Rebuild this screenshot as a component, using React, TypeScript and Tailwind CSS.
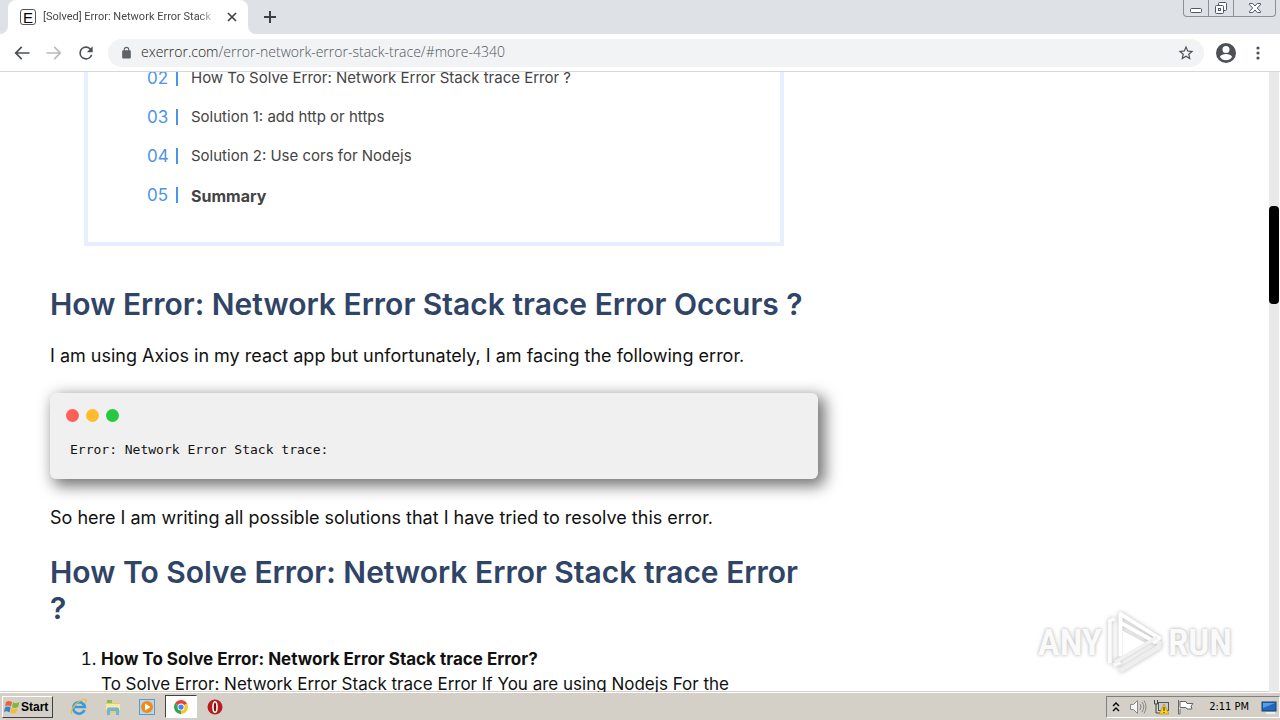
import type { ReactNode } from "react";

const tocItems = [
  { num: "02", label: "How To Solve Error: Network Error Stack trace Error ?", bold: false },
  { num: "03", label: "Solution 1: add http or https", bold: false },
  { num: "04", label: "Solution 2: Use cors for Nodejs", bold: false },
  { num: "05", label: "Summary", bold: true },
];

function IconButton({ label, className = "", children }: { label: string; className?: string; children: ReactNode }) {
  return (
    <button aria-label={label} className={`flex shrink-0 items-center justify-center ${className}`}>
      {children}
    </button>
  );
}

function TabStrip() {
  return (
    <header className="flex h-[34px] shrink-0 items-start bg-[#dee1e6]">
      <div className="relative ml-2 flex h-full w-[240px] items-center rounded-t-lg bg-white pl-3">
        <svg className="absolute bottom-0 -left-2 size-2" viewBox="0 0 8 8" aria-hidden="true">
          <path d="M8 0v8H0a8 8 0 0 0 8-8z" fill="#fff" />
        </svg>
        <svg className="absolute -right-2 bottom-0 size-2" viewBox="0 0 8 8" aria-hidden="true">
          <path d="M0 0v8h8a8 8 0 0 1-8-8z" fill="#fff" />
        </svg>
        <span className="flex size-4 shrink-0 items-center justify-center rounded-[3px] border border-[#555] font-['Liberation_Sans',sans-serif] text-[15px] leading-none text-black">
          E
        </span>
        <span className="ml-[7px] w-[173px] overflow-hidden font-[Roboto,sans-serif] text-[11px] whitespace-nowrap text-[#45484c] [mask-image:linear-gradient(to_right,#000_156px,transparent_173px)]">
          [Solved] Error: Network Error Stack trace
        </span>
        <IconButton label="Close tab" className="ml-2 size-4">
          <svg className="size-4" viewBox="0 0 16 16" stroke="#3c4043" strokeWidth="1.6">
            <path d="M4 4l8 8M12 4l-8 8" />
          </svg>
        </IconButton>
      </div>
      <IconButton label="New tab" className="ml-3 h-[34px] w-5">
        <svg className="size-4" viewBox="0 0 16 16" stroke="#3c4043" strokeWidth="2">
          <path d="M8 2v12M2 8h12" />
        </svg>
      </IconButton>
      <div className="mr-1 ml-auto flex h-[17px] rounded-b border border-t-0 border-[#8b8f98]">
        <IconButton label="Minimize" className="w-[25px] border-r border-[#8b8f98]">
          <svg className="h-4 w-5" viewBox="0 0 20 16" fill="#fff" stroke="#4e5668">
            <rect x="4.500" y="8.500" width="11" height="4" rx="1" />
          </svg>
        </IconButton>
        <IconButton label="Restore" className="w-[25px] border-r border-[#8b8f98]">
          <svg className="h-4 w-4" viewBox="0 0 16 16" fill="#fff" stroke="#4e5668">
            <rect x="5.500" y="2.500" width="8" height="8" rx="1" />
            <rect x="2.500" y="5.500" width="8" height="8" rx="1" />
            <rect x="5.500" y="8.500" width="2" height="2" />
          </svg>
        </IconButton>
        <IconButton label="Close" className="w-[41px]">
          <svg className="h-4 w-4" viewBox="0 0 16 16" fill="#fff" stroke="#4e5668">
            <path d="M2.500 3.500h3.200L8 6l2.300-2.500h3.200v1.200L10.300 8l3.200 3.400v1.100h-3.200L8 10l-2.300 2.500H2.500v-1.100L5.700 8 2.500 4.700z" />
          </svg>
        </IconButton>
      </div>
    </header>
  );
}

function Toolbar() {
  return (
    <div className="flex h-[38px] shrink-0 items-center border-b border-[#d5d7da] bg-white pl-3">
      <IconButton label="Back" className="mr-3 size-5">
        <svg className="size-5" viewBox="0 0 24 24" fill="#4d5156">
          <path d="M21 11H6.800l5.600-5.600L11 4l-8 8 8 8 1.400-1.400L6.800 13H21z" />
        </svg>
      </IconButton>
      <IconButton label="Forward" className="mr-3 size-5">
        <svg className="size-5" viewBox="0 0 24 24" fill="#b9bbbe">
          <path d="M3 11h14.200l-5.600-5.600L13 4l8 8-8 8-1.400-1.400 5.600-5.600H3z" />
        </svg>
      </IconButton>
      <IconButton label="Reload" className="mr-3 size-5">
        <svg className="size-5" viewBox="0 0 24 24" fill="#4d5156">
          <path d="M17.650 6.350A7.958 7.958 0 0 0 12 4a8 8 0 1 0 7.730 10h-2.080A6 6 0 1 1 12 6c1.660 0 3.140.69 4.220 1.780L13 11h7V4z" />
        </svg>
      </IconButton>
      <div className="flex h-7 flex-1 items-center rounded-full bg-[#f1f3f4] pr-2 pl-3">
        <svg className="mr-2 size-[13px] shrink-0" viewBox="0 0 24 24" fill="#5f6368" aria-hidden="true">
          <path d="M18 8h-1V6.500a5 5 0 0 0-10 0V8H6a2 2 0 0 0-2 2v11a2 2 0 0 0 2 2h12a2 2 0 0 0 2-2V10a2 2 0 0 0-2-2zM9 6.500a3 3 0 0 1 6 0V8H9z" />
        </svg>
        <a href="#more-4340" className="-mt-0.5 flex-1 font-['Open_Sans',sans-serif] text-sm font-light text-[#50555b]">
          <span className="text-[#1c1d20]">exerror.com</span>/error-network-error-stack-trace/#more-4340
        </a>
        <IconButton label="Bookmark this page" className="size-5">
          <svg className="size-[18px]" viewBox="0 0 24 24" fill="#4d5156">
            <path d="M22 9.240l-7.190-.62L12 2 9.190 8.630 2 9.240l5.460 4.730L5.820 21 12 17.270 18.180 21l-1.630-7.030zM12 15.400l-3.760 2.270 1-4.280-3.320-2.880 4.380-.38L12 6.100l1.710 4.040 4.380.38-3.320 2.880 1 4.280z" />
          </svg>
        </IconButton>
      </div>
      <IconButton label="Profile" className="ml-3 size-5">
        <svg className="size-5" viewBox="2 2 20 20" fill="#4d5156">
          <path d="M12 2a10 10 0 1 0 0 20 10 10 0 0 0 0-20zm0 3a3.500 3.500 0 1 1 0 7 3.500 3.500 0 0 1 0-7zm0 14.200a7.200 7.200 0 0 1-6-3.220c.03-1.990 4-3.080 6-3.080s5.970 1.090 6 3.080a7.200 7.200 0 0 1-6 3.220z" />
        </svg>
      </IconButton>
      <IconButton label="Menu" className="mx-3 size-5">
        <svg className="size-5" viewBox="0 0 20 20" fill="#4d5156">
          <circle cx="10" cy="5" r="1.600" />
          <circle cx="10" cy="10" r="1.600" />
          <circle cx="10" cy="15" r="1.600" />
        </svg>
      </IconButton>
    </div>
  );
}

function Watermark() {
  return (
    <div className="absolute right-12 bottom-4 flex items-center gap-1 font-['Liberation_Sans_Narrow','Roboto_Condensed',Roboto,sans-serif] text-[37px] leading-none font-semibold text-[#fafafa] [text-shadow:0_0_3px_#c0c0c0,0_0_5px_#d4d4d4]">
      <span>ANY</span>
      <svg className="h-[68px] w-[58px] overflow-visible drop-shadow-[0_0_2px_#b8b8b8]" viewBox="0 0 60 68" fill="none" strokeLinejoin="round" aria-hidden="true">
        <path d="M17 22l24 13-24 14z" fill="#fff" />
        <path d="M4 56V12l5-2M8 58l7-3" stroke="#fbfbfb" strokeWidth="4" />
        <path d="M15 49V5l40 25-4 4-36-20" stroke="#fff" strokeWidth="4" />
        <path d="M9 55l44-26" stroke="#f1f1f1" strokeWidth="4" />
        <path d="M14 64l41-25v-6" stroke="#eeeeee" strokeWidth="5" />
      </svg>
      <span>RUN</span>
    </div>
  );
}

function Article() {
  return (
    <article className="-mt-[13px] ml-[50px] w-[768px] shrink-0 text-[#111]">
      <nav aria-label="Table of contents" className="mx-[34px] border-4 border-t-0 border-[#e7effe] pb-[27px]">
        <ul className="ml-[59px]">
          {tocItems.map((item) => (
            <li key={item.num}>
              <a href="#toc" className="flex h-[39px] items-center">
                <span className="mb-0.5 w-[31px] shrink-0 border-r-2 border-[#4b95e9] text-[17px] leading-4 text-[#4b95e9]">{item.num}</span>
                <span className={`ml-[13px] text-[#444] ${item.bold ? "text-base font-bold" : "text-[15px]"}`}>{item.label}</span>
              </a>
            </li>
          ))}
        </ul>
      </nav>
      <h2 className="mt-10 text-[30px] leading-9 font-semibold whitespace-nowrap text-[#2f4466]">
        How Error: Network Error Stack trace Error Occurs ?
      </h2>
      <p className="mt-[21px] text-lg leading-[25px]">
        I am using Axios in my react app but unfortunately, I am facing the following error.
      </p>
      <div className="mt-[25px] h-[86px] rounded-md bg-[#f0f0f0] pt-4 pl-4 shadow-[5px_5px_15px_2px_rgba(0,0,0,0.55)]">
        <div className="flex gap-[7px]">
          <span className="size-[13px] rounded-full bg-[#ff5f56]" />
          <span className="size-[13px] rounded-full bg-[#ffbd2e]" />
          <span className="size-[13px] rounded-full bg-[#27c93f]" />
        </div>
        <pre className="mt-[18px] ml-1 font-['DejaVu_Sans_Mono',monospace] text-[13px] leading-5">Error: Network Error Stack trace:</pre>
      </div>
      <p className="mt-[26px] text-lg leading-[25px]">
        So here I am writing all possible solutions that I have tried to resolve this error.
      </p>
      <h2 className="mt-6 text-[30px] leading-9 font-semibold text-[#2f4466]">
        How To Solve Error: Network Error Stack trace Error ?
      </h2>
      <ol className="mt-[21px] list-decimal pl-[51px] text-[17px] leading-[25px]">
        <li>
          <strong className="font-bold">How To Solve Error: Network Error Stack trace Error?</strong>
          <br />
          To Solve Error: Network Error Stack trace Error If You are using Nodejs For the
        </li>
      </ol>
    </article>
  );
}

function Taskbar() {
  return (
    <footer className="flex h-7 shrink-0 items-center border-t border-white bg-[#d4d0c8] font-['DejaVu_Sans_Condensed','DejaVu_Sans',sans-serif] text-[11px] text-black outline outline-[#d4d0c8]">
      <button className="ml-0.5 flex h-[22px] items-center gap-px border border-t-white border-r-[#404040] border-b-[#404040] border-l-white pr-1 pl-px font-['Liberation_Sans',sans-serif] text-xs font-bold">
        <svg className="size-4" viewBox="0 0 16 16" aria-hidden="true">
          <path d="M2 3c2-1.500 4-1.500 6 0L7 7.500c-2-1.300-4-1.300-6 0z" fill="#ec6530" />
          <path d="M9 3.200c2 1.300 4 1.300 6.500-.2l-1.500 5c-2 1.300-4 1.300-6 0z" fill="#7fb541" />
          <path d="M1 8.500c2-1.300 4-1.300 5.700 0l-1.200 5c-2-1.500-4-1.500-5.500-.5z" fill="#3683d0" />
          <path d="M7.700 8.800c2 1.300 4 1.300 6 .2l-1.400 4.500c-2 1.300-4 1.300-6 0z" fill="#f7bd32" />
        </svg>
        Start
      </button>
      <IconButton label="Internet Explorer" className="ml-4 size-5">
        <svg className="size-[18px]" viewBox="0 0 18 18" fill="none">
          <path d="M14.500 12a5.800 5.800 0 1 1 .3-3H5" stroke="#3a9ad9" strokeWidth="2.600" />
          <path d="M2 16C-1 13 6 4 12 2c4-1.300 5 0 3.500 3" stroke="#e9bd3d" strokeWidth="1.300" />
        </svg>
      </IconButton>
      <IconButton label="File Explorer" className="ml-3.5 size-5">
        <svg className="size-[18px]" viewBox="0 0 18 18">
          <path d="M2 3h6l1 2h7v10H2z" fill="#e8cc68" />
          <path d="M3 2h5v3H3z" fill="#7fbd6d" />
          <path d="M2 6h14v6H2z" fill="#f9e9a4" />
          <path d="M3 17v-6q0-1.500 1.500-1.500h9Q15 9.500 15 11v6h-3v-4H6v4z" fill="#6eb4db" />
        </svg>
      </IconButton>
      <IconButton label="Media Player" className="ml-3.5 size-5">
        <svg className="size-[18px]" viewBox="0 0 18 18">
          <rect x="1.500" y="1.500" width="15" height="15" fill="#b5d8ef" stroke="#5b9bc9" />
          <circle cx="9" cy="9" r="6" fill="#f28a16" />
          <path d="M7 5.500v7L12.500 9z" fill="#fff" />
        </svg>
      </IconButton>
      <IconButton label="Chrome" className="ml-2 h-[23px] w-8 border border-t-[#404040] border-r-white border-b-white border-l-[#404040] bg-white">
        <svg className="size-3.5" viewBox="0 0 16 16">
          <path d="M8 8L1.100 4A8 8 0 0 1 14.900 4z" fill="#e54335" />
          <path d="M8 8L1.100 4A8 8 0 0 0 8 16z" fill="#34a353" />
          <path d="M8 8l6.900-4A8 8 0 0 1 8 16z" fill="#f9c82d" />
          <circle cx="8" cy="8" r="4" fill="#fff" />
          <circle cx="8" cy="8" r="3" fill="#4285f4" />
        </svg>
      </IconButton>
      <IconButton label="Opera" className="ml-2 size-5">
        <svg className="size-4" viewBox="0 0 16 16">
          <circle cx="8" cy="8" r="7.500" fill="#ba1a1c" />
          <ellipse cx="8" cy="8" rx="2" ry="5.300" fill="#7d0c0e" stroke="#fff" strokeWidth="1.600" />
        </svg>
      </IconButton>
      <div className="ml-auto flex h-[22px] items-center border border-t-[#808080] border-r-white border-b-white border-l-[#808080] pr-0.5 pl-1">
        <IconButton label="Show hidden icons" className="h-4 w-2.5">
          <svg className="h-3 w-2" viewBox="0 0 8 12" fill="none" stroke="#000" strokeWidth="1.400">
            <path d="M1 5l3-3 3 3M1 10l3-3 3 3" />
          </svg>
        </IconButton>
        <svg className="ml-2 h-4 w-[18px]" viewBox="0 0 18 16" fill="none" stroke="#888" aria-label="Volume">
          <path d="M1.500 5.500h3l4-4v13l-4-4h-3z" fill="#f7f7f7" />
          <path d="M11 5q2 3 0 6M13 3q3.500 5 0 10M15 1.500q4 6.500 0 13" />
        </svg>
        <svg className="ml-1.5 h-4 w-4" viewBox="0 0 16 16" aria-label="Network">
          <rect x="5.500" y="3.500" width="10" height="8" fill="#c4ccd4" stroke="#555" />
          <path d="M1.500 1v4h3V1M3 5v9h5" fill="none" stroke="#444" />
          <path d="M11 5l5 10H6z" fill="#ffd21f" stroke="#a98200" strokeWidth=".6" />
          <path d="M11 8v4M11 13v1" stroke="#222" />
        </svg>
        <svg className="ml-2 h-4 w-[18px]" viewBox="0 0 18 16" fill="#fff" stroke="#666" aria-label="Action Center">
          <path d="M1.500 1v14h1.500V10M3 2.500h6l1 2h6l-2 2.500 1 3h-5l-1-1.500H3z" />
        </svg>
        <time className="ml-3.5 pt-0.5">2:11 PM</time>
        <svg className="ml-3 h-4 w-4" viewBox="0 0 16 16" aria-label="Show desktop">
          <rect x="1" y="3" width="14" height="9" fill="#2467ba" stroke="#164179" />
          <path d="M2 4h12L2 9z" fill="#5b9be3" />
          <path d="M5 14h9" stroke="#eee" strokeWidth="2" />
        </svg>
      </div>
    </footer>
  );
}

export default function App() {
  return (
    <div className="flex h-screen flex-col overflow-hidden bg-white">
      <TabStrip />
      <Toolbar />
      <main className="relative flex min-h-0 flex-1 items-start overflow-hidden font-[Inter,sans-serif]">
        <Article />
        <div className="mr-px ml-auto h-full w-2.5 shrink-0 bg-[#e9e9e9] pt-[134px]">
          <div className="h-[98px] rounded-sm bg-black" />
        </div>
        <Watermark />
      </main>
      <Taskbar />
    </div>
  );
}
